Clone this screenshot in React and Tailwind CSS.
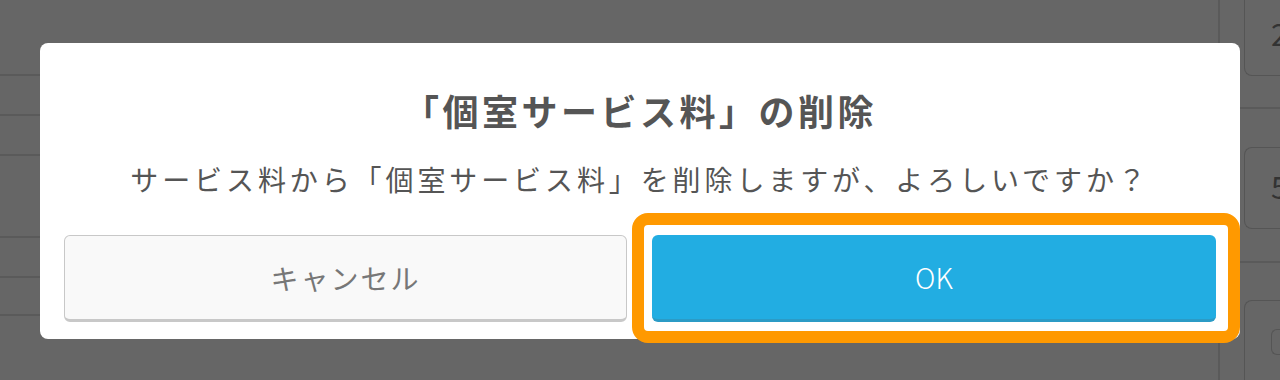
import React from 'react';

const font = { fontFamily: '"Noto Sans CJK JP", "Noto Sans", sans-serif' };

// rows of the list that sits behind the dialog
const leftRows = ['h-[76px]', 'h-[40px]', 'h-[40px]', 'h-[82px]', 'h-[40px]', 'h-[38px]'];

const SideCard = ({ label, className }) => (
  <div className={`ml-[24px] w-[60px] rounded-l-lg border border-r-0 border-[#555] pl-[26px] text-[30px] text-[#333] ${className}`}>
    {label}
  </div>
);

const Backdrop = () => (
  <div className="flex h-[380px] w-[1280px] bg-[#666]">
    <div className="flex w-[1218px] shrink-0 flex-col">
      {leftRows.map((h, i) => (
        <div key={i} className={`${h} border-b-2 border-[#5a5a5a]`} />
      ))}
    </div>
    <div className="flex w-[62px] shrink-0 flex-col border-l-2 border-[#5a5a5a]">
      <div className="h-[116px] border-b-2 border-[#5a5a5a]">
        <SideCard label="2" className="-mt-[10px] h-[86px] pt-[24px] leading-[36px]" />
      </div>
      <div className="h-[162px] border-b-2 border-[#5a5a5a] pt-[38px]">
        <SideCard label="5" className="h-[82px] pt-[20px] leading-[36px]" />
      </div>
      <div className="pt-[37px]">
        <div className="ml-[24px] h-[80px] rounded-tl-lg border border-r-0 border-b-0 border-[#555] pl-[26px] pt-[28px]">
          <div className="h-[26px] w-[20px] rounded-l-md border border-r-0 border-[#555]" />
        </div>
      </div>
    </div>
  </div>
);

export default function App() {
  return (
    <div className="relative h-[380px] w-[1280px] overflow-hidden" style={font}>
      <Backdrop />

      {/* dialog */}
      <div className="absolute left-[40px] top-[43px] flex h-[296px] w-[1200px] flex-col rounded-lg bg-white px-6">
        <h2 className="mt-[45px] text-center text-[36px] font-bold leading-[44px] tracking-[3.5px] text-[#555]">
          「個室サービス料」の削除
        </h2>
        <p className="mt-[29px] text-center text-[28px] leading-[36px] tracking-[3.9px] text-[#555]">
          サービス料から「個室サービス料」を削除しますが、よろしいですか？
        </p>
        <div className="mt-[38px] flex gap-[25px]">
          <button className="flex h-[87px] w-[563px] items-center justify-center rounded-md border border-b-[3px] border-[#c8c8c8] bg-[#f9f9f9] text-[28px] tracking-[2px] text-[#777]">
            キャンセル
          </button>
          <button className="flex h-[87px] w-[564px] items-center justify-center rounded-md border-b-[3px] border-[#2b9bc6] bg-[#22ade2] text-[28px] font-light text-white">
            OK
          </button>
        </div>
      </div>

      {/* highlight around OK */}
      <div className="pointer-events-none absolute left-[632px] top-[213px] h-[130px] w-[608px] rounded-[16px] border-[12px] border-[#ff9900]" />
    </div>
  );
}
